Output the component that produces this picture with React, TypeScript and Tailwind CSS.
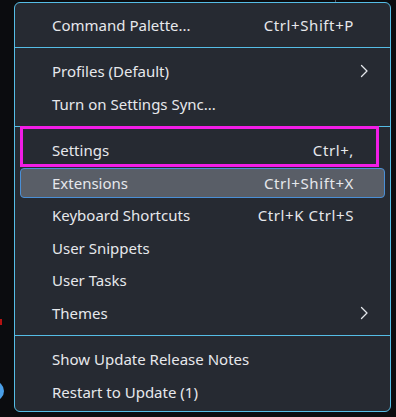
import { Fragment } from 'react';

type Item = {
  label: string;
  shortcut?: string;
  submenu?: boolean;
  active?: boolean;
};

// groups are split by separators
const groups: Item[][] = [
  [{ label: 'Command Palette...', shortcut: 'Ctrl+Shift+P' }],
  [
    { label: 'Profiles (Default)', submenu: true },
    { label: 'Turn on Settings Sync...' },
  ],
  [
    { label: 'Settings', shortcut: 'Ctrl+,' },
    { label: 'Extensions', shortcut: 'Ctrl+Shift+X', active: true },
    { label: 'Keyboard Shortcuts', shortcut: 'Ctrl+K Ctrl+S' },
    { label: 'User Snippets' },
    { label: 'User Tasks' },
    { label: 'Themes', submenu: true },
  ],
  [
    { label: 'Show Update Release Notes' },
    { label: 'Restart to Update (1)' },
  ],
];

function Chevron() {
  return (
    <svg width="9" height="14" viewBox="0 0 9 14" fill="none" aria-hidden="true">
      <path d="M1.5 1.5 L7 7 L1.5 12.5" stroke="#e4e7ec" strokeWidth="1.3" strokeLinecap="round" strokeLinejoin="round" />
    </svg>
  );
}

function MenuRow({ item }: { item: Item }) {
  return (
    <div className="h-[32.5px] px-[5px] py-px">
      <div
        className={`flex h-full items-center rounded-[4px] border pl-[31px] pr-[30px] ${
          item.active ? 'border-[#4a8fd6] bg-[#595e67]' : 'border-transparent'
        }`}
      >
        <span className="flex-1 whitespace-nowrap">{item.label}</span>
        {item.shortcut && <span className="whitespace-nowrap tracking-[0.6px]">{item.shortcut}</span>}
        {item.submenu && (
          <span className="-mr-[15px] flex w-[10px] justify-center">
            <Chevron />
          </span>
        )}
      </div>
    </div>
  );
}

export default function App() {
  return (
    <div
      className="relative h-[417px] w-[396px] overflow-hidden bg-[#0b0c0f] text-[15px] text-[#e6e8ec]"
      style={{ fontFamily: '"Segoe UI", "Noto Sans", "Open Sans", sans-serif' }}
    >
      {/* bits of the window behind the menu */}
      <div className="absolute left-[335px] top-0 h-[2px] w-px bg-[#5a5e66]" />
      <div className="absolute left-0 top-[319px] h-[6px] w-[2px] bg-[#b51212]" />
      <div className="absolute left-[-16px] top-[381px] h-[20px] w-[20px] rounded-full bg-[#4a9fe8]" />

      {/* menu panel */}
      <div className="ml-[14px] mt-[2px] h-[410px] w-[377px] rounded-[6px] border border-[#55bde6] bg-[#262a32] pb-[3px] pt-[5.5px]">
        {groups.map((group, gi) => (
          <Fragment key={gi}>
            {gi > 0 && <div className="mb-[7px] mt-[6px] h-px bg-[#55bde6]" />}
            {group.map((item) => (
              <MenuRow key={item.label} item={item} />
            ))}
          </Fragment>
        ))}
      </div>

      {/* highlight annotation around Settings */}
      <div className="pointer-events-none absolute left-[20px] top-[126px] h-[41px] w-[359px] border-[3px] border-[#f21de6]" />
    </div>
  );
}
